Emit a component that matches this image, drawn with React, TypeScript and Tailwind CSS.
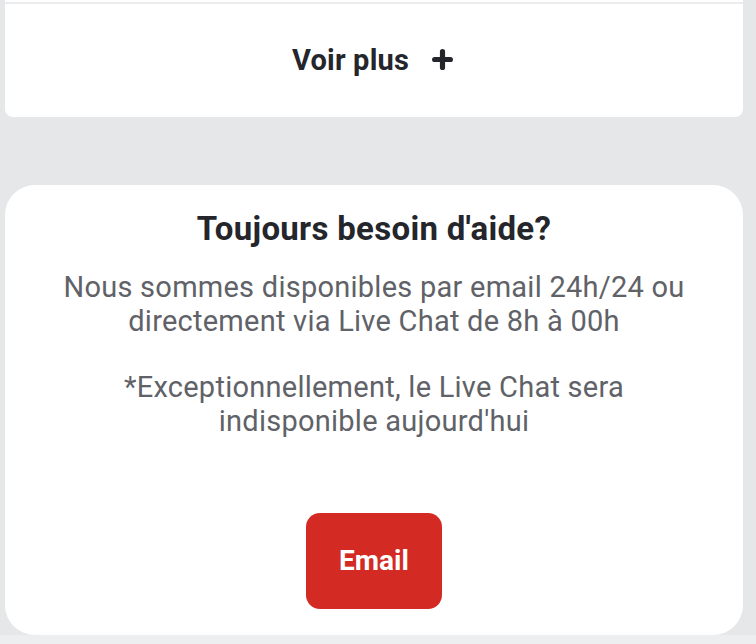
import { Plus } from 'lucide-react';

const App = () => {
  return (
    <div className="min-h-[644px] w-[756px] bg-[#e6e7e9] font-['Roboto',sans-serif] overflow-hidden">
      <div className="ml-[5px] mr-[13px] bg-white rounded-b-[8px]">
        <div className="h-[2px]" />
        <div className="h-[2px] bg-[#ececee]" />
        <div className="h-[113px] flex items-center justify-center gap-[20px] pb-[2px]">
          <span className="text-[29px] leading-[34px] font-bold text-[#25262b] tracking-[0.2px]">Voir plus</span>
          <Plus size={27} strokeWidth={4.6} className="text-[#25262b]" />
        </div>
      </div>

      <div className="h-[68px]" />

      <div className="ml-[5px] mr-[13px] bg-white rounded-[30px] h-[450px] flex flex-col items-center pt-[24px]">
        <h2 className="text-[33px] font-bold text-[#25262b] leading-[40px] tracking-[0.3px]">
          Toujours besoin d'aide?
        </h2>
        <p className="mt-[21px] text-[29px] leading-[34px] text-[#606267] text-center tracking-[0.25px]">
          Nous sommes disponibles par email 24h/24 ou
          <br />
          directement via Live Chat de 8h à 00h
        </p>
        <p className="mt-[32px] text-[29px] leading-[34px] text-[#606267] text-center tracking-[0.25px]">
          *Exceptionnellement, le Live Chat sera
          <br />
          indisponible aujourd'hui
        </p>
        <button className="mt-[75px] w-[136px] h-[96px] rounded-[14px] bg-[#d32a24] text-white text-[28px] font-bold">
          Email
        </button>
      </div>
      <div className="h-[9px] bg-[#eceef0]" />
    </div>
  );
};

export default App;
